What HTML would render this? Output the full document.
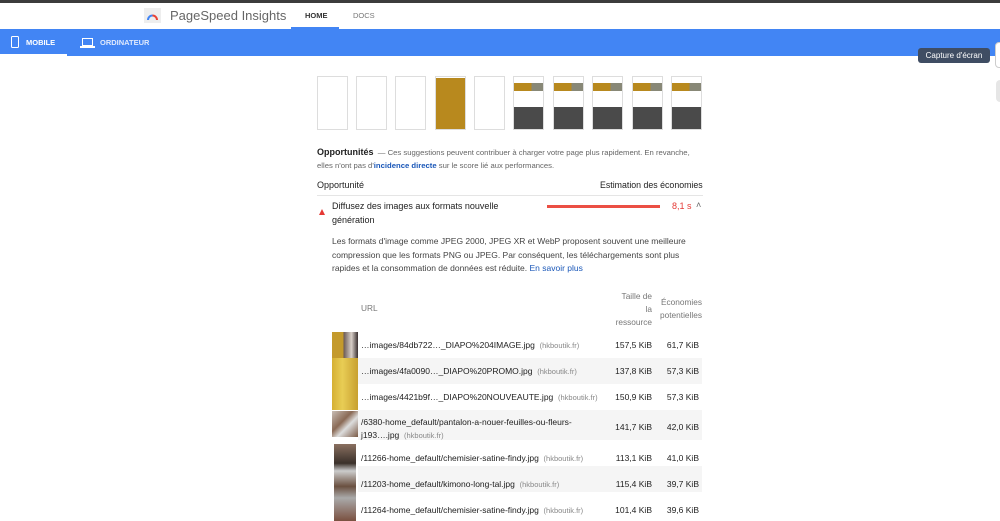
<!DOCTYPE html><html><head><meta charset="utf-8"><style>
*{margin:0;padding:0;box-sizing:border-box}
body{width:1000px;height:521px;overflow:hidden;background:#fff;font-family:"Liberation Sans",sans-serif;color:#212121;position:relative}
.a{position:absolute}
.f{position:absolute;top:76px;width:31px;height:54px;border:1px solid #ddd;background:#fff}
.t{font-size:8.5px;white-space:nowrap}
.g{color:#888;font-size:7.5px}
.r{text-align:right}
</style></head><body>
<div class="a" style="left:0;top:0;width:1000px;height:3px;background:#3c3c3c"></div>
<div class="a" style="left:144px;top:8px;width:17px;height:15px;background:#eee"></div>
<svg class="a" style="left:146px;top:12px" width="13" height="9"><path d="M2 8 A4.5 4.5 0 0 1 6.5 3.5" stroke="#4285f4" stroke-width="2" fill="none"/><path d="M6.5 3.5 A4.5 4.5 0 0 1 11 8" stroke="#ea4335" stroke-width="2" fill="none"/></svg>
<div class="a" style="left:170px;top:8px;font-size:13px;color:#666">PageSpeed Insights</div>
<div class="a" style="left:305px;top:11px;font-size:7.5px;font-weight:bold;color:#333">HOME</div>
<div class="a" style="left:291px;top:27px;width:48px;height:2px;background:#4285f4"></div>
<div class="a" style="left:353px;top:11px;font-size:7.5px;color:#777">DOCS</div>
<div class="a" style="left:0;top:29px;width:1000px;height:27px;background:#4285f4"></div>
<div class="a" style="left:0;top:54px;width:67px;height:2px;background:#fff"></div>
<div class="a" style="left:11px;top:36px;width:8px;height:12px;border:1.5px solid #fff;border-radius:1.5px"></div>
<div class="a" style="left:26px;top:38px;font-size:7.5px;font-weight:bold;color:#fff">MOBILE</div>
<div class="a" style="left:82px;top:38px;width:11px;height:8px;border:1.5px solid #fff"></div>
<div class="a" style="left:80px;top:46px;width:15px;height:1.5px;background:#fff"></div>
<div class="a" style="left:100px;top:38px;font-size:7.5px;font-weight:bold;color:#dfe9fd">ORDINATEUR</div>
<div class="a" style="left:918px;top:48px;width:72px;height:15px;background:#3f4d63;border-radius:3px;color:#fff;font-size:8px;text-align:center;line-height:15px">Capture d'écran</div>
<div class="a" style="left:995px;top:42px;width:10px;height:26px;background:#fff;border:1px solid #ccc;border-radius:4px"></div>
<div class="a" style="left:996px;top:80px;width:10px;height:22px;background:#e6e6e6;border-radius:4px"></div>

<div class="f" style="left:317px"></div><div class="f" style="left:356px"></div><div class="f" style="left:395px"></div>
<div class="f" style="left:435px"><div style="margin-top:1px;height:51px;background:#b8891e"></div></div>
<div class="f" style="left:474px"></div>
<div class="f" style="left:513px"><div style="margin-top:6px;height:8px;background:linear-gradient(90deg,#b8891e 60%,#887 60%)"></div><div style="margin-top:16px;height:22px;background:#4a4a4a"></div></div>
<div class="f" style="left:553px"><div style="margin-top:6px;height:8px;background:linear-gradient(90deg,#b8891e 60%,#887 60%)"></div><div style="margin-top:16px;height:22px;background:#4a4a4a"></div></div>
<div class="f" style="left:592px"><div style="margin-top:6px;height:8px;background:linear-gradient(90deg,#b8891e 60%,#887 60%)"></div><div style="margin-top:16px;height:22px;background:#4a4a4a"></div></div>
<div class="f" style="left:632px"><div style="margin-top:6px;height:8px;background:linear-gradient(90deg,#b8891e 60%,#887 60%)"></div><div style="margin-top:16px;height:22px;background:#4a4a4a"></div></div>
<div class="f" style="left:671px"><div style="margin-top:6px;height:8px;background:linear-gradient(90deg,#b8891e 60%,#887 60%)"></div><div style="margin-top:16px;height:22px;background:#4a4a4a"></div></div>

<div class="a t" style="left:317px;top:146px;line-height:13px;color:#666;font-size:7.7px"><b style="color:#212121;font-size:9px">Opportunités</b> &nbsp;— Ces suggestions peuvent contribuer à charger votre page plus rapidement. En revanche,<br>elles n'ont pas d'<span style="color:#1a57b8;font-weight:bold">incidence directe</span> sur le score lié aux performances.</div>
<div class="a t" style="left:317px;top:180px;font-size:9px">Opportunité</div>
<div class="a t" style="left:600px;top:180px;font-size:8.8px">Estimation des économies</div>
<div class="a" style="left:317px;top:195px;width:386px;height:1px;background:#e5e5e5"></div>
<div class="a" style="left:319px;top:209px;width:0;height:0;border-left:3.5px solid transparent;border-right:3.5px solid transparent;border-bottom:6px solid #e53935"></div>
<div class="a" style="left:332px;top:200px;font-size:9px;line-height:13.5px;color:#212121">Diffusez des images aux formats nouvelle<br>génération</div>
<div class="a" style="left:547px;top:205px;width:113px;height:2.5px;background:#eb4f44"></div>
<div class="a t" style="left:672px;top:201px;font-size:9px;color:#e53935">8,1 s</div>
<div class="a t" style="left:696px;top:200px;font-size:9px;color:#666">˄</div>
<div class="a" style="left:332px;top:235px;font-size:8.5px;line-height:13.5px;color:#444;white-space:nowrap">Les formats d'image comme JPEG 2000, JPEG XR et WebP proposent souvent une meilleure<br>compression que les formats PNG ou JPEG. Par conséquent, les téléchargements sont plus<br>rapides et la consommation de données est réduite. <span style="color:#1a57b8">En savoir plus</span></div>

<div class="a t" style="left:361px;top:303px;color:#777;font-size:8.3px">URL</div>
<div class="a r" style="left:600px;top:290px;width:52px;color:#777;font-size:8.3px;line-height:13px">Taille de<br>la<br>ressource</div>
<div class="a r" style="left:652px;top:296px;width:50px;color:#777;font-size:8.3px;line-height:13px">Économies<br>potentielles</div>

<div class="a" style="left:358px;top:358px;width:344px;height:26px;background:#f5f5f5"></div>
<div class="a" style="left:358px;top:410px;width:344px;height:30px;background:#f5f5f5"></div>
<div class="a" style="left:358px;top:466px;width:344px;height:26px;background:#f5f5f5"></div>

<div class="a" style="left:332px;top:332px;width:26px;height:26px;background:linear-gradient(90deg,#c49a2c 45%,#6b5a55 45%,#d8cfc8 75%,#3a3030)"></div>
<div class="a" style="left:332px;top:358px;width:26px;height:52px;background:linear-gradient(90deg,#d6b033,#e8cd55 40%,#c8a030)"></div>
<div class="a" style="left:332px;top:411px;width:26px;height:26px;background:linear-gradient(135deg,#c8bdb4,#8a6a55 40%,#ddd 60%,#7a5a45)"></div>
<div class="a" style="left:334px;top:444px;width:22px;height:77px;background:linear-gradient(180deg,#8a7060,#3a302a 25%,#ccc 35%,#6a5040 55%,#aaa 70%,#7a5040)"></div>

<div class="a t" style="left:361px;top:340px">…images/84db722…_DIAPO%204IMAGE.jpg &nbsp;<span class="g">(hkboutik.fr)</span></div>
<div class="a t" style="left:361px;top:366px">…images/4fa0090…_DIAPO%20PROMO.jpg &nbsp;<span class="g">(hkboutik.fr)</span></div>
<div class="a t" style="left:361px;top:392px">…images/4421b9f…_DIAPO%20NOUVEAUTE.jpg &nbsp;<span class="g">(hkboutik.fr)</span></div>
<div class="a t" style="left:361px;top:416px;line-height:13px">/6380-home_default/pantalon-a-nouer-feuilles-ou-fleurs-<br>j193….jpg &nbsp;<span class="g">(hkboutik.fr)</span></div>
<div class="a t" style="left:361px;top:453px">/11266-home_default/chemisier-satine-findy.jpg &nbsp;<span class="g">(hkboutik.fr)</span></div>
<div class="a t" style="left:361px;top:479px">/11203-home_default/kimono-long-tal.jpg &nbsp;<span class="g">(hkboutik.fr)</span></div>
<div class="a t" style="left:361px;top:505px">/11264-home_default/chemisier-satine-findy.jpg &nbsp;<span class="g">(hkboutik.fr)</span></div>

<div class="a t r" style="left:600px;top:340px;width:52px">157,5 KiB</div><div class="a t r" style="left:654px;top:340px;width:45px">61,7 KiB</div>
<div class="a t r" style="left:600px;top:366px;width:52px">137,8 KiB</div><div class="a t r" style="left:654px;top:366px;width:45px">57,3 KiB</div>
<div class="a t r" style="left:600px;top:392px;width:52px">150,9 KiB</div><div class="a t r" style="left:654px;top:392px;width:45px">57,3 KiB</div>
<div class="a t r" style="left:600px;top:422px;width:52px">141,7 KiB</div><div class="a t r" style="left:654px;top:422px;width:45px">42,0 KiB</div>
<div class="a t r" style="left:600px;top:453px;width:52px">113,1 KiB</div><div class="a t r" style="left:654px;top:453px;width:45px">41,0 KiB</div>
<div class="a t r" style="left:600px;top:479px;width:52px">115,4 KiB</div><div class="a t r" style="left:654px;top:479px;width:45px">39,7 KiB</div>
<div class="a t r" style="left:600px;top:505px;width:52px">101,4 KiB</div><div class="a t r" style="left:654px;top:505px;width:45px">39,6 KiB</div>
</body></html>
